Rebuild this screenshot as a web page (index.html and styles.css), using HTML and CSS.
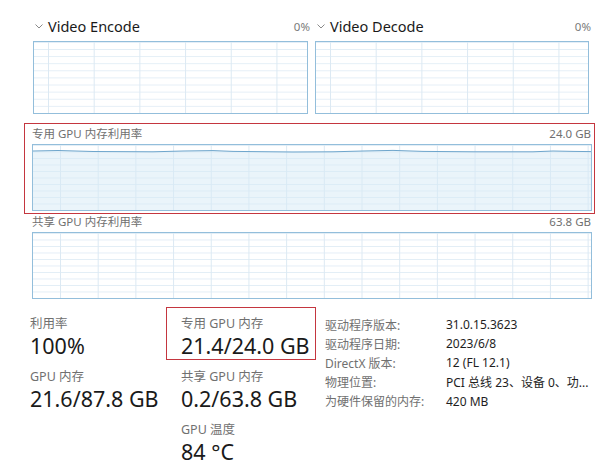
FILE: index.html
```html
<!DOCTYPE html>
<html lang="zh">
<head>
<meta charset="utf-8">
<link rel="stylesheet" href="styles.css">
</head>
<body>
<div class="page">
  <div class="engines">
    <div class="engine">
      <div class="eng-head">
        <span class="eng-title"><svg class="chev" width="8" height="5" viewBox="0 0 8 5"><polyline points="0.5,0.5 4,4 7.5,0.5" fill="none" stroke="#8a8a8a" stroke-width="1"/></svg>Video Encode</span>
        <span class="eng-pct">0%</span>
      </div>
      <div class="graph g-small"></div>
    </div>
    <div class="engine">
      <div class="eng-head">
        <span class="eng-title"><svg class="chev" width="8" height="5" viewBox="0 0 8 5"><polyline points="0.5,0.5 4,4 7.5,0.5" fill="none" stroke="#8a8a8a" stroke-width="1"/></svg>Video Decode</span>
        <span class="eng-pct">0%</span>
      </div>
      <div class="graph g-small"></div>
    </div>
  </div>

  <div class="mem-box">
    <div class="mem-head"><span>专用 GPU 内存利用率</span><span>24.0 GB</span></div>
    <div class="graph g-wide">
      <svg class="data" viewBox="0 0 558 65" preserveAspectRatio="none">
        <path d="M0,6 L25,5.5 L60,6.5 L120,6.8 L150,6 L180,5.6 L200,6.4 L260,7 L300,6.8 L330,6 L360,5.4 L390,6.4 L440,6.8 L500,6.8 L520,6 L540,6.4 L558,6.6 L558,65 L0,65 Z" fill="#d6e9f6" fill-opacity="0.5"/>
        <path d="M0,6 L25,5.5 L60,6.5 L120,6.8 L150,6 L180,5.6 L200,6.4 L260,7 L300,6.8 L330,6 L360,5.4 L390,6.4 L440,6.8 L500,6.8 L520,6 L540,6.4 L558,6.6" fill="none" stroke="#6fa6cc" stroke-width="1"/>
      </svg>
    </div>
  </div>

  <div class="shared">
    <div class="mem-head shared-head"><span>共享 GPU 内存利用率</span><span>63.8 GB</span></div>
    <div class="graph g-wide"></div>
  </div>

  <div class="stats">
    <div class="col">
      <div class="stat"><div class="s-label">利用率</div><div class="s-value">100%</div></div>
      <div class="stat"><div class="s-label">GPU 内存</div><div class="s-value">21.6/87.8 GB</div></div>
    </div>
    <div class="col col2">
      <div class="stat hl"><div class="s-label">专用 GPU 内存</div><div class="s-value">21.4/24.0 GB</div></div>
      <div class="stat"><div class="s-label">共享 GPU 内存</div><div class="s-value">0.2/63.8 GB</div></div>
      <div class="stat"><div class="s-label">GPU 温度</div><div class="s-value">84 °C</div></div>
    </div>
    <div class="info">
      <div class="i-label">驱动程序版本:</div><div class="i-value">31.0.15.3623</div>
      <div class="i-label">驱动程序日期:</div><div class="i-value">2023/6/8</div>
      <div class="i-label">DirectX 版本:</div><div class="i-value">12 (FL 12.1)</div>
      <div class="i-label">物理位置:</div><div class="i-value">PCI 总线 23、设备 0、功...</div>
      <div class="i-label">为硬件保留的内存:</div><div class="i-value">420 MB</div>
    </div>
  </div>
</div>
</body>
</html>
```

FILE: styles.css
```css
html, body {
  margin: 0;
  padding: 0;
  background: #ffffff;
}

body {
  font-family: "Noto Sans", "Noto Sans CJK SC", sans-serif;
  color: #1a1a1a;
  width: 608px;
  height: 475px;
  overflow: hidden;
}

.page {
  padding-top: 14px;
}

.engines {
  display: grid;
  grid-template-columns: 275px 274px;
  column-gap: 7px;
  padding-left: 33px;
}

.eng-head {
  display: flex;
  justify-content: space-between;
  align-items: center;
  height: 24px;
  margin-bottom: 3px;
  margin-right: -2px;
}

.eng-title {
  display: flex;
  align-items: center;
  font-size: 14.5px;
  color: #1a1a1a;
}

.chev {
  margin-left: 2px;
  margin-right: 5px;
  margin-top: 1px;
}

.eng-pct {
  font-size: 11.5px;
  color: #7a7a7a;
}

.graph {
  box-sizing: border-box;
  border: 1px solid #93bedb;
  background-color: #ffffff;
}

.g-small {
  height: 73px;
  background-image:
    linear-gradient(to right, #dce9f3 1px, transparent 1px),
    linear-gradient(to bottom, #e2edf6 1px, transparent 1px);
  background-size: 45.7px 100%, 100% 7.1px;
  background-position: 14px 0, 0 0;
}

.g-wide {
  width: 560px;
  height: 67px;
  background-image:
    linear-gradient(to right, #dce9f3 1px, transparent 1px),
    linear-gradient(to bottom, #e2edf6 1px, transparent 1px);
  background-size: 37.7px 100%, 100% 6.5px;
  background-position: 27px 0, 0 0;
}

.data {
  display: block;
  width: 100%;
  height: 100%;
}

.mem-box {
  box-sizing: border-box;
  width: 571px;
  margin: 9px 0 0 24px;
  border: 1px solid #c4363f;
  padding: 1px 2px 2px 7px;
}

.mem-head {
  display: flex;
  justify-content: space-between;
  font-size: 11.5px;
  color: #707070;
  line-height: 18px;
  height: 18px;
  margin-bottom: 1px;
  margin-right: 1px;
}

.shared {
  padding-left: 32px;
}

.shared-head {
  width: 560px;
  line-height: 16px;
  height: 16px;
  margin-bottom: 2px;
  margin-right: 0;
  box-sizing: border-box;
  padding-right: 1px;
}

.stats {
  display: flex;
  margin-top: 8px;
}

.col {
  margin-left: 15px;
  width: 151px;
}

.col2 {
  margin-left: 0;
  width: 159px;
}

.stat {
  border: 1px solid transparent;
  padding: 7px 5px 0 14px;
}

.stat.hl {
  border-color: #c4363f;
  width: fit-content;
}

.s-label {
  font-size: 12.5px;
  line-height: 18px;
  color: #707070;
}

.s-value {
  font-size: 21.5px;
  line-height: 26px;
  color: #1a1a1a;
  white-space: nowrap;
}

.info {
  display: grid;
  grid-template-columns: 121px auto;
  grid-auto-rows: 19.2px;
  align-items: center;
  padding-top: 8px;
  font-size: 12px;
}

.i-label {
  color: #707070;
  white-space: nowrap;
}

.i-value {
  color: #1e1e1e;
  white-space: nowrap;
}
```
